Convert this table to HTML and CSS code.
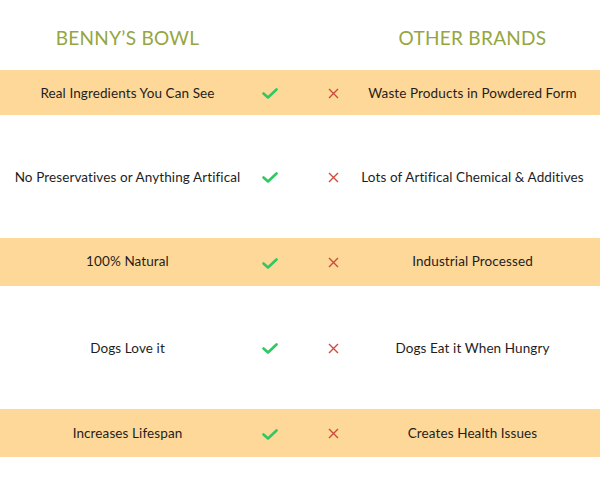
FILE: index.html
```html
<!DOCTYPE html>
<html>
<head>
<meta charset="utf-8">
<link rel="stylesheet" href="styles.css">
</head>
<body>
<div class="table">
  <div class="head">
    <div class="brand">BENNY’S BOWL</div>
    <div class="mid"></div>
    <div class="brand">OTHER BRANDS</div>
  </div>
  <div class="row band first">
    <div class="cell">Real Ingredients You Can See</div>
    <div class="icons"><svg class="check" viewBox="0 0 16 11"><path d="M1.5 5.5 L6 9.5 L14.5 1.5"/></svg><svg class="cross" viewBox="0 0 11 11"><path d="M1 1 L10 10 M10 1 L1 10"/></svg></div>
    <div class="cell">Waste Products in Powdered Form</div>
  </div>
  <div class="row tall">
    <div class="cell">No Preservatives or Anything Artifical</div>
    <div class="icons"><svg class="check" viewBox="0 0 16 11"><path d="M1.5 5.5 L6 9.5 L14.5 1.5"/></svg><svg class="cross" viewBox="0 0 11 11"><path d="M1 1 L10 10 M10 1 L1 10"/></svg></div>
    <div class="cell">Lots of Artifical Chemical &amp; Additives</div>
  </div>
  <div class="row band">
    <div class="cell up">100% Natural</div>
    <div class="icons"><svg class="check" viewBox="0 0 16 11"><path d="M1.5 5.5 L6 9.5 L14.5 1.5"/></svg><svg class="cross" viewBox="0 0 11 11"><path d="M1 1 L10 10 M10 1 L1 10"/></svg></div>
    <div class="cell up">Industrial Processed</div>
  </div>
  <div class="row tall">
    <div class="cell">Dogs Love it</div>
    <div class="icons"><svg class="check" viewBox="0 0 16 11"><path d="M1.5 5.5 L6 9.5 L14.5 1.5"/></svg><svg class="cross" viewBox="0 0 11 11"><path d="M1 1 L10 10 M10 1 L1 10"/></svg></div>
    <div class="cell">Dogs Eat it When Hungry</div>
  </div>
  <div class="row band">
    <div class="cell">Increases Lifespan</div>
    <div class="icons"><svg class="check" viewBox="0 0 16 11"><path d="M1.5 5.5 L6 9.5 L14.5 1.5"/></svg><svg class="cross" viewBox="0 0 11 11"><path d="M1 1 L10 10 M10 1 L1 10"/></svg></div>
    <div class="cell">Creates Health Issues</div>
  </div>
</div>
</body>
</html>
```
FILE: styles.css
```css
html, body {
  margin: 0;
  padding: 0;
  background: #ffffff;
}
body {
  font-family: "Lato", "Noto Sans", sans-serif;
  color: #1e1e1e;
  width: 600px;
  height: 500px;
  overflow: hidden;
}
.table {
  display: flex;
  flex-direction: column;
}
.head {
  display: flex;
  align-items: center;
  height: 70px;
}
.brand {
  width: 255px;
  text-align: center;
  font-size: 19px;
  color: #95a640;
  letter-spacing: 0.3px;
  padding-top: 4px;
}
.mid {
  width: 90px;
}
.row {
  display: flex;
  align-items: center;
}
.band {
  background: #fed898;
  height: 48px;
}
.band.first {
  height: 45px;
}
.tall {
  height: 123px;
}
.cell {
  width: 255px;
  text-align: center;
  font-size: 13.5px;
  line-height: 16px;
  letter-spacing: 0.1px;
}
.cell.up {
  padding-bottom: 3px;
}
.icons {
  width: 90px;
  display: flex;
  align-items: center;
  padding-left: 7px;
  box-sizing: border-box;
}
.check {
  width: 16px;
  height: 11px;
  fill: none;
  stroke: #2fc861;
  stroke-width: 2.6;
  stroke-linecap: round;
  stroke-linejoin: round;
  margin-top: 2px;
}
.cross {
  width: 11px;
  height: 11px;
  fill: none;
  stroke: #cc4b3c;
  stroke-width: 1.4;
  margin-left: 50px;
  margin-top: 1px;
}
```
